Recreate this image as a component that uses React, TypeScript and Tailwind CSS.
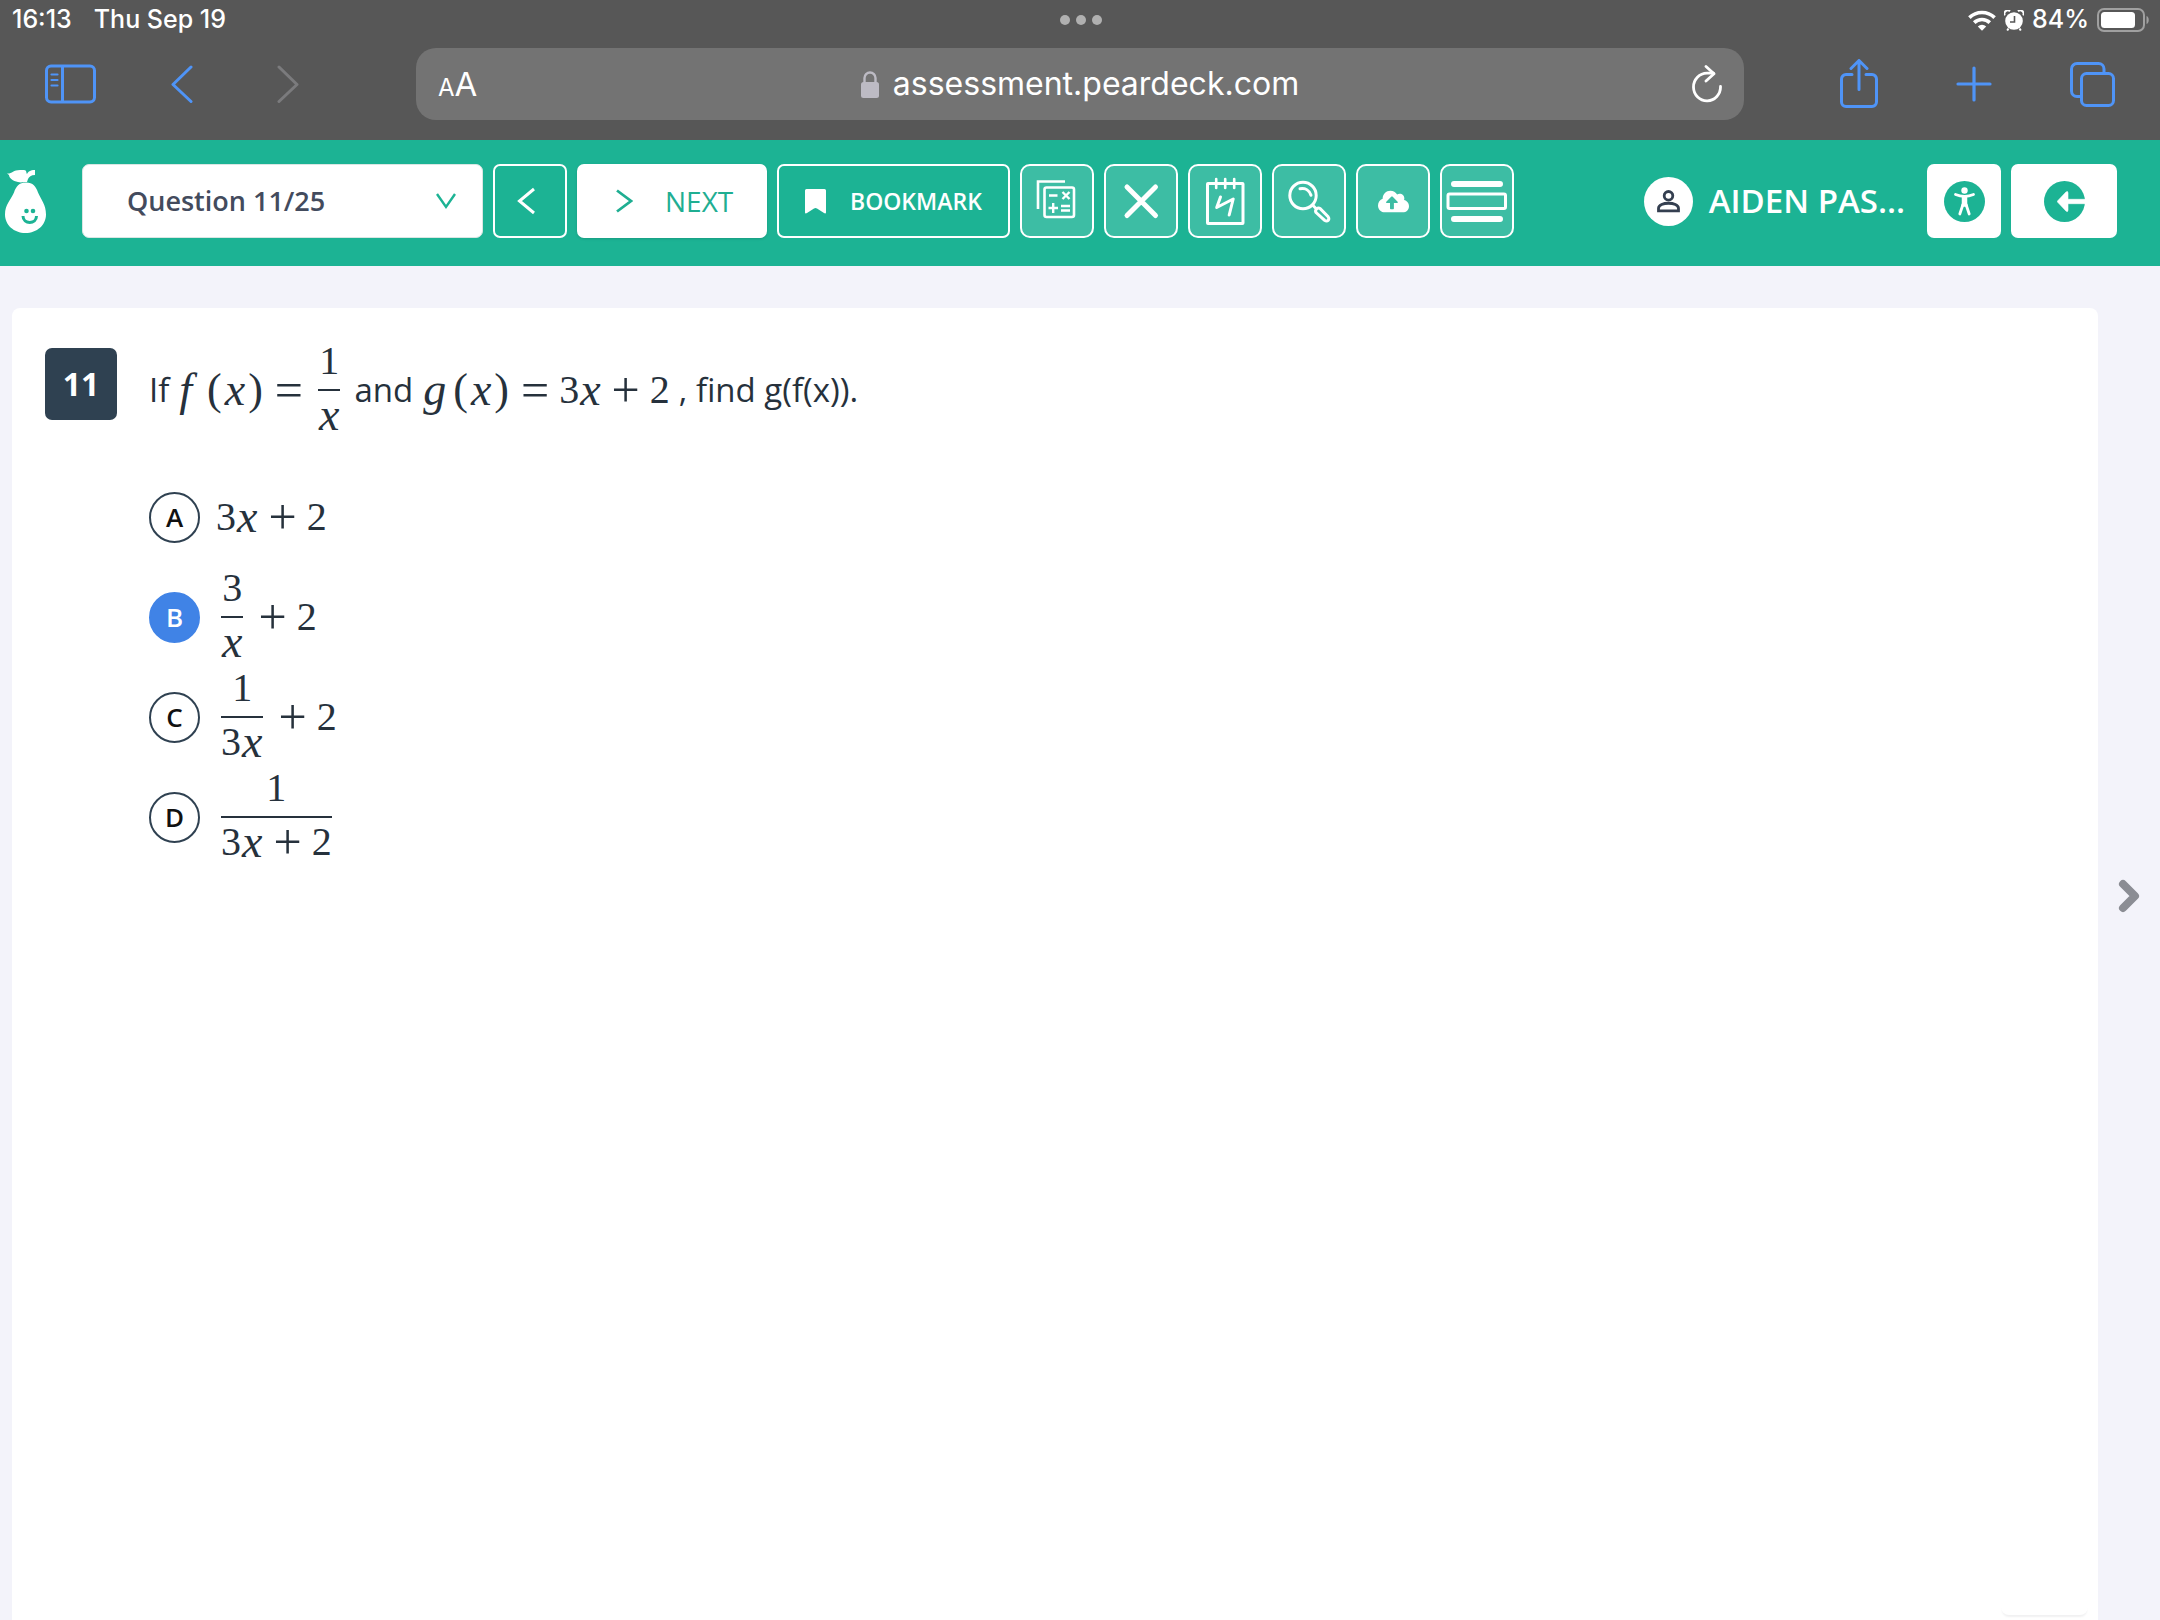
import { useState } from 'react';
import type { ReactNode } from 'react';
import { FaCloudUploadAlt } from 'react-icons/fa';

const TOTAL_QUESTIONS = 25;

function Num({ children }: { children: ReactNode }) {
  return <span>{children}</span>;
}

function Var({ children }: { children: ReactNode }) {
  return <span className="px-px text-[46px] italic">{children}</span>;
}

function Paren({ children }: { children: ReactNode }) {
  return <span className="px-0.5 text-[44px]">{children}</span>;
}

function Op({ children }: { children: ReactNode }) {
  return <span className="px-[10px] text-[50px] leading-10">{children}</span>;
}

/** 分数。上下の高さを揃えて横線を行の中央に置く */
function Frac({ top, bottom }: { top: ReactNode; bottom: ReactNode }) {
  return (
    <span className="mx-[5px] inline-flex flex-col items-stretch">
      <span className="flex h-12 items-start justify-center">{top}</span>
      <span className="h-0.5 bg-[#26313c]" />
      <span className="flex h-12 items-center justify-center">{bottom}</span>
    </span>
  );
}

function MathRow({ children }: { children: ReactNode }) {
  return (
    <span className="inline-flex items-center font-['Liberation_Serif',serif] text-[40px] leading-10 text-[#26313c]">
      {children}
    </span>
  );
}

const OPTIONS: { id: string; label: string; body: ReactNode }[] = [
  { id: 'A', label: '3x + 2', body: <><Num>3</Num><Var>x</Var><Op>+</Op><Num>2</Num></> },
  { id: 'B', label: '3/x + 2', body: <><Frac top={<Num>3</Num>} bottom={<Var>x</Var>} /><Op>+</Op><Num>2</Num></> },
  {
    id: 'C',
    label: '1/(3x) + 2',
    body: <><Frac top={<Num>1</Num>} bottom={<><Num>3</Num><Var>x</Var></>} /><Op>+</Op><Num>2</Num></>,
  },
  {
    id: 'D',
    label: '1/(3x + 2)',
    body: <Frac top={<Num>1</Num>} bottom={<><Num>3</Num><Var>x</Var><Op>+</Op><Num>2</Num></>} />,
  },
];

function StatusBar() {
  return (
    <div className="grid h-10 grid-cols-3 items-center pr-[10px] pl-3 text-[25px] font-medium text-white">
      <div className="flex gap-[22px]">
        <span>16:13</span>
        <span>Thu Sep 19</span>
      </div>
      <div className="flex justify-center gap-1.5">
        <span className="size-[10px] rounded-full bg-[#b0b0b0]" />
        <span className="size-[10px] rounded-full bg-[#b0b0b0]" />
        <span className="size-[10px] rounded-full bg-[#b0b0b0]" />
      </div>
      <div className="flex items-center justify-end gap-2">
        <svg width="28" height="21" viewBox="0 0 28 21" fill="none" stroke="#fff" strokeWidth="3.6" aria-hidden>
          <path d="M1.4 7.6a18 18 0 0 1 25.2 0" />
          <path d="M6.2 12.6a11.2 11.2 0 0 1 15.6 0" />
          <path d="M9.8 16.4a6 6 0 0 1 8.4 0L14 20.8z" fill="#fff" stroke="none" />
        </svg>
        <svg width="20" height="21" viewBox="0 0 20 21" aria-hidden>
          <circle cx="10" cy="11" r="8.8" fill="#fff" />
          <path d="M.8 5.4A3.4 3.4 0 0 1 6 1.2M19.2 5.4A3.4 3.4 0 0 0 14 1.2M4.5 18.5l-1.3 2M15.5 18.5l1.3 2" stroke="#fff" strokeWidth="2" fill="none" />
          <path d="M10.5 6v6H6" stroke="#575757" strokeWidth="1.6" fill="none" />
        </svg>
        <span>84%</span>
        <svg width="53" height="24" viewBox="0 0 53 24" aria-hidden>
          <rect x="1" y="1" width="46" height="22" rx="6" fill="none" stroke="#a0a0a0" strokeWidth="2" />
          <rect x="4" y="4" width="34" height="16" rx="3.5" fill="#fff" />
          <path d="M49.5 8c3 1 3 7 0 8z" fill="#a0a0a0" />
        </svg>
      </div>
    </div>
  );
}

function BrowserBar() {
  return (
    <div className="grid grid-cols-[416fr_1328fr_416fr] items-center pt-2 pb-5">
      <div className="flex items-center pl-[45px] text-[#4f94f7]">
        <button type="button" aria-label="Show sidebar">
          <svg width="51" height="40" viewBox="0 0 51 40" fill="none" stroke="currentColor" strokeWidth="3">
            <rect x="1.5" y="2" width="48" height="36" rx="4.5" />
            <path d="M17.5 2v36" />
            <path d="M6.5 10.5h6M6.5 16h6M6.5 21.5h6" strokeWidth="2.2" strokeLinecap="round" />
          </svg>
        </button>
        <button type="button" className="ml-[75px]" aria-label="Back">
          <svg width="22" height="40" viewBox="0 0 22 40" fill="none" stroke="currentColor" strokeWidth="3" strokeLinecap="round" strokeLinejoin="round">
            <path d="M20 3L2 20.5 20 37.5" />
          </svg>
        </button>
        <button type="button" className="ml-[84px] text-[#7b7b7d]" aria-label="Forward" disabled>
          <svg width="22" height="40" viewBox="0 0 22 40" fill="none" stroke="currentColor" strokeWidth="3" strokeLinecap="round" strokeLinejoin="round">
            <path d="M2 3l18 17.5L2 37.5" />
          </svg>
        </button>
      </div>

      <div className="grid h-[72px] grid-cols-[1fr_auto_1fr] items-center rounded-[20px] bg-[#737373] px-[22px] text-white">
        <button type="button" className="flex items-baseline justify-self-start pt-1 leading-none" aria-label="Page settings">
          <span className="text-2xl">A</span>
          <span className="text-[33px]">A</span>
        </button>
        <a href="#address" className="flex items-center gap-3.5 text-[32px]">
          <svg width="18" height="27" viewBox="0 0 18 27" aria-hidden>
            <rect y="11" width="18" height="16" rx="2.5" fill="#bdbbc4" />
            <path d="M3.5 12V7a5.5 5.5 0 0 1 11 0v5" fill="none" stroke="#bdbbc4" strokeWidth="2.4" />
          </svg>
          assessment.peardeck.com
        </a>
        <button type="button" className="justify-self-end" aria-label="Reload">
          <svg width="30" height="38" viewBox="0 0 30 38" fill="none" stroke="currentColor" strokeWidth="2.8" strokeLinecap="round" strokeLinejoin="round">
            <path d="M28.5 21.5A13.5 13.8 0 1 1 15 8.2h6.5" />
            <path d="M14 1.5l8 7.2-8 7.3" />
          </svg>
        </button>
      </div>

      <div className="flex items-center justify-end gap-[78px] pr-[45px] text-[#4f94f7]">
        <button type="button" aria-label="Share">
          <svg width="38" height="50" viewBox="0 0 38 50" fill="none" stroke="currentColor" strokeWidth="3" strokeLinecap="round" strokeLinejoin="round">
            <path d="M12 15.5H6A4.5 4.5 0 0 0 1.5 20v23A4.5 4.5 0 0 0 6 47.5h26a4.5 4.5 0 0 0 4.5-4.5V20a4.5 4.5 0 0 0-4.5-4.5h-6" />
            <path d="M19 30.500V2M11 9.500l8-8 8 8" />
          </svg>
        </button>
        <button type="button" aria-label="New tab">
          <svg width="36" height="36" viewBox="0 0 36 36" stroke="currentColor" strokeWidth="3.2" strokeLinecap="round">
            <path d="M18 2v32M2 18h32" />
          </svg>
        </button>
        <button type="button" aria-label="Tabs">
          <svg width="45" height="45" viewBox="0 0 45 45" fill="none" stroke="currentColor" strokeWidth="3">
            <rect x="11.5" y="11.5" width="32" height="32" rx="5" />
            <path d="M11 34.5H7A5.5 5.5 0 0 1 1.5 29V7A5.5 5.5 0 0 1 7 1.5h21.5A5.5 5.5 0 0 1 34 7v4" />
          </svg>
        </button>
      </div>
    </div>
  );
}

function PearLogo() {
  return (
    <svg width="42" height="64" viewBox="0 0 42 64" aria-label="Pear" role="img">
      <path
        d="M2 4.5C7 5 8 1 15 1h4c3 0 2 3 3 4 1-2 3-4 8-4v5c-4 0-6 2-7 4l-1 3c-4 0-6 1-9 0C8 12 4 9 4 6z"
        fill="#fff"
      />
      <path d="M21 13.5c7 0 10 4 12 10 3 7 8 12 8 22C41 56 32 64 20.5 64S0 56 0 45.5c0-10 6-15 9-22 2-6 5-10 12-10z" fill="#fff" />
      <circle cx="21.5" cy="42" r="2.3" fill="#1cb394" />
      <circle cx="28" cy="42" r="2.3" fill="#1cb394" />
      <path d="M18 47c0 8.5 13.5 8.5 13.5 0" fill="none" stroke="#1cb394" strokeWidth="3" />
    </svg>
  );
}

function ToolButton({ label, children }: { label: string; children: ReactNode }) {
  return (
    <button
      type="button"
      aria-label={label}
      title={label}
      className="flex size-[74px] shrink-0 items-center justify-center rounded-[10px] border-2 border-white bg-[#3dbda4] text-white"
    >
      {children}
    </button>
  );
}

function ToolSvg({ children }: { children: ReactNode }) {
  return (
    <svg width="70" height="70" viewBox="2 2 70 70" fill="none" stroke="currentColor" strokeWidth="2.6" aria-hidden>
      {children}
    </svg>
  );
}

function AssessmentBar() {
  const [question, setQuestion] = useState(11);

  return (
    <header className="flex h-[126px] items-center gap-[10px] bg-[#1cb394] pr-[43px] pb-1 pl-[5px] font-['Open_Sans','Noto_Sans',sans-serif]">
      <PearLogo />
      <div className="relative ml-[25px] w-[401px] shrink-0">
        <select
          aria-label="Question"
          value={question}
          onChange={(e) => setQuestion(Number(e.target.value))}
          className="h-[74px] w-full appearance-none rounded-[7px] border border-[#d9e6e3] bg-white pl-11 text-[27px] font-semibold text-[#434b5d]"
        >
          {Array.from({ length: TOTAL_QUESTIONS }, (_, i) => (
            <option key={i} value={i + 1}>
              Question {i + 1}/{TOTAL_QUESTIONS}
            </option>
          ))}
        </select>
        <svg className="pointer-events-none absolute top-7 right-[27px]" width="20" height="18" viewBox="0 0 20 18" fill="none" stroke="#1cb394" strokeWidth="2.4" aria-hidden>
          <path d="M1 2l9 13L19 2" />
        </svg>
      </div>
      <button
        type="button"
        aria-label="Previous"
        className="flex h-[74px] w-[74px] shrink-0 items-center justify-center rounded-[7px] border-2 border-white pr-2 text-white"
      >
        <svg width="18" height="28" viewBox="0 0 18 28" fill="none" stroke="currentColor" strokeWidth="3">
          <path d="M17 2L2.5 14 17 26" />
        </svg>
      </button>
      <button
        type="button"
        className="flex h-[74px] w-[190px] shrink-0 items-center gap-8 rounded-[7px] bg-white pl-[39px] text-[28px] text-[#1fae92] shadow-sm"
      >
        <svg width="17" height="25" viewBox="0 0 17 25" fill="none" stroke="currentColor" strokeWidth="2.8" aria-hidden>
          <path d="M1 1.5L15 12 1 22.5" />
        </svg>
        NEXT
      </button>
      <button
        type="button"
        className="flex h-[74px] w-[233px] shrink-0 items-center gap-6 rounded-[7px] border-2 border-white pl-[26px] text-[23px] font-semibold text-white"
      >
        <svg width="21" height="25" viewBox="0 0 21 25" fill="currentColor" aria-hidden>
          <path d="M1.5 0h18A1.5 1.5 0 0 1 21 1.5v22c0 1-1 1.300-2 .5l-7-4.500a3 3 0 0 0-3 0L2 24c-1 .8-2 .5-2-.5v-22A1.500 1.500 0 0 1 1.500 0z" />
        </svg>
        BOOKMARK
      </button>
      <ToolButton label="Calculator">
        <ToolSvg>
          <path d="M18 45V17.5h27" />
          <rect x="24.5" y="23.5" width="29.5" height="29.5" rx="2" />
          <path d="M29 31.5h8.5M42.5 28l7 7M49.5 28l-7 7M28.5 44H38M33.2 39v10M41 42h9M41 46.5h9" strokeWidth="2.4" />
        </ToolSvg>
      </ToolButton>
      <ToolButton label="Cross out">
        <ToolSvg>
          <path d="M23 23l28.5 28.5M51.5 23L23 51.5" strokeWidth="5" strokeLinecap="round" />
        </ToolSvg>
      </ToolButton>
      <ToolButton label="Scratchpad">
        <ToolSvg>
          <rect x="19.5" y="19.5" width="35.5" height="40" rx=".5" strokeWidth="3" />
          <path d="M28.2 15v9M37.2 15v9M46.2 15v9" strokeLinecap="round" />
          <path d="M32.5 33l-3.8 10.5L45.2 35l-4 16" strokeWidth="3" strokeLinecap="round" strokeLinejoin="round" />
        </ToolSvg>
      </ToolButton>
      <ToolButton label="Magnifier">
        <ToolSvg>
          <circle cx="31" cy="31.5" r="13.2" strokeWidth="3" />
          <path d="M28 24.8c5-1 9.500 1.500 11 6.500" strokeLinecap="round" strokeWidth="3" />
          <path d="M41 41.500l4 4" strokeWidth="3" />
          <path d="M44 48.500l8.500 7.700c3 2 5.500-.5 3.600-3.400L48 44.500c-2.200-1.500-5.500 1.500-4 4z" strokeWidth="3" />
        </ToolSvg>
      </ToolButton>
      <ToolButton label="Upload">
        <FaCloudUploadAlt className="h-[25px] w-[31px]" />
      </ToolButton>
      <ToolButton label="Line reader">
        <ToolSvg>
          <path d="M14 20h46M14 55h46" strokeWidth="6" strokeLinecap="round" />
          <rect x="8" y="30" width="57.5" height="14.5" rx="1.5" strokeWidth="3" />
        </ToolSvg>
      </ToolButton>

      <div className="ml-auto flex shrink-0 items-center gap-4 text-[33px] font-semibold text-white">
        <svg width="49" height="49" viewBox="0 0 49 49" fill="none" stroke="#343f50" strokeWidth="2.8" aria-hidden>
          <circle cx="24.5" cy="24.5" r="24.5" fill="#fff" stroke="none" />
          <circle cx="24.5" cy="18.8" r="4.3" />
          <path d="M14.5 33.8v-2.3c0-7 20-7 20 0v2.3z" />
        </svg>
        <span>AIDEN PAS...</span>
      </div>
      <button type="button" aria-label="Accessibility" className="ml-3 flex size-[74px] shrink-0 items-center justify-center rounded-[7px] bg-white">
        <svg width="41" height="41" viewBox="0 0 41 41" fill="none" stroke="#fff" strokeLinecap="round" strokeLinejoin="round">
          <circle cx="20.5" cy="20.5" r="20.5" fill="#1cb394" stroke="none" />
          <circle cx="20.5" cy="9.5" r="3.2" fill="#fff" stroke="none" />
          <path d="M11.5 13.5c6 2.5 12 2.5 18 0" strokeWidth="2.8" />
          <path d="M18.5 15.5h4V22l.5 3h-5l.5-3z" fill="#fff" strokeWidth="1.5" />
          <path d="M18.8 24l-3 9M22.2 24l3 9" strokeWidth="2.8" />
        </svg>
      </button>
      <button type="button" aria-label="Exit" className="flex h-[74px] w-[106px] shrink-0 items-center justify-center rounded-[7px] bg-white">
        <svg width="41" height="41" viewBox="0 0 41 41">
          <circle cx="20.5" cy="20.5" r="20.5" fill="#1cb394" />
          <path d="M13.5 20l8.5-9q2-1.500 2 1v6.300h17v4.400H24V29q0 2.500-2 1l-8.500-9z" fill="#fff" stroke="#fff" strokeWidth=".6" />
        </svg>
      </button>
    </header>
  );
}

export default function App() {
  const [answer, setAnswer] = useState('B');

  return (
    <div className="flex min-h-screen flex-col bg-[#f3f3fa]">
      <div className="bg-[#575757] font-[Inter,'Liberation_Sans',sans-serif]">
        <StatusBar />
        <BrowserBar />
      </div>
      <AssessmentBar />

      <div className="flex grow pt-[42px] pl-3">
        <main className="relative flex grow items-start gap-8 rounded-t-lg bg-white pt-[33px] pl-[33px] font-['Open_Sans','Noto_Sans',sans-serif]">
          <div className="mt-[7px] flex size-[72px] items-center justify-center rounded-[7px] bg-[#2f4151] text-[32px] font-bold text-white">
            11
          </div>
          <div>
            <div className="flex items-center gap-[9px] text-[33px] leading-10 text-[#26313c]">
              <span>If</span>
              <MathRow>
                <Var>f</Var><span className="w-3" /><Paren>(</Paren><Var>x</Var><Paren>)</Paren>
                <Op>=</Op>
                <Frac top={<Num>1</Num>} bottom={<Var>x</Var>} />
              </MathRow>
              <span>and</span>
              <MathRow>
                <Var>g</Var><span className="w-1" /><Paren>(</Paren><Var>x</Var><Paren>)</Paren>
                <Op>=</Op>
                <Num>3</Num><Var>x</Var><Op>+</Op><Num>2</Num>
              </MathRow>
              <span>, find g(f(x)).</span>
            </div>
            <fieldset className="mt-7" aria-label="Answer">
              {OPTIONS.map((o) => (
                <label key={o.id} className="flex h-[100px] cursor-pointer items-center gap-4">
                  <input
                    type="radio"
                    name="answer"
                    value={o.id}
                    aria-label={`${o.id}: ${o.label}`}
                    checked={answer === o.id}
                    onChange={() => setAnswer(o.id)}
                    className="peer sr-only"
                  />
                  <span className="flex size-[51px] items-center justify-center rounded-full border-2 border-[#2f4151] text-[26px] leading-none font-semibold text-[#111] peer-checked:border-[#4083e6] peer-checked:bg-[#4083e6] peer-checked:text-white">
                    {o.id}
                  </span>
                  <MathRow>{o.body}</MathRow>
                </label>
              ))}
            </fieldset>
          </div>
          <div className="absolute right-[10px] bottom-[5px] h-10 w-[87px] rounded-b-lg bg-white shadow-[0_3px_2px_-1px_#f1f1f2]" />
        </main>
        <aside className="flex w-[62px] shrink-0 justify-center pt-[570px]">
          <button type="button" aria-label="Next question" className="self-start">
            <svg width="24" height="36" viewBox="0 0 24 36" fill="none" stroke="#8b8d94" strokeWidth="8" strokeLinejoin="round" strokeLinecap="round">
              <path d="M6 6l12 12L6 30" />
            </svg>
          </button>
        </aside>
      </div>
    </div>
  );
}
